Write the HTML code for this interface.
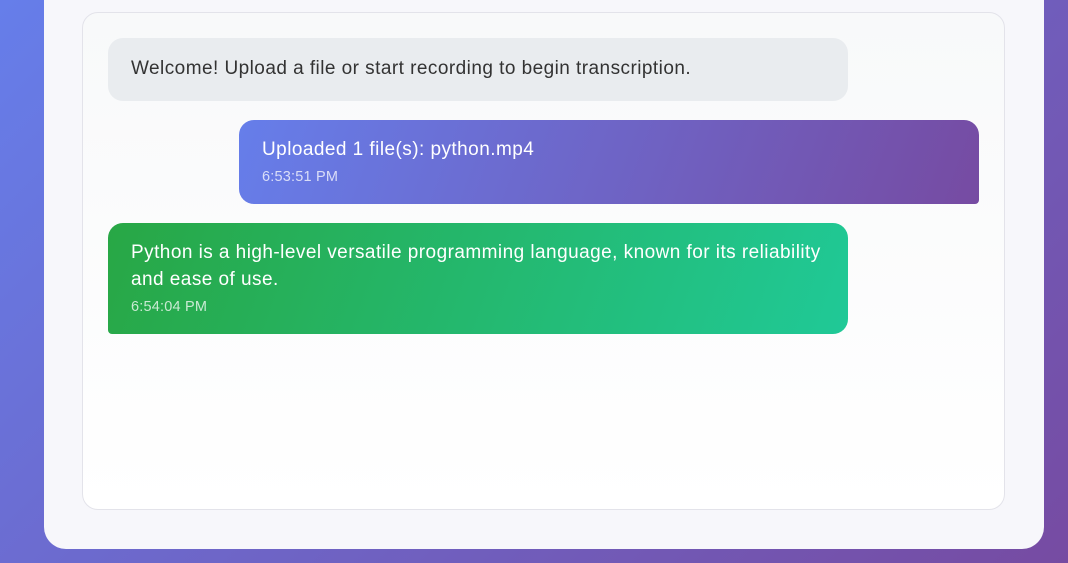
<!DOCTYPE html>
<html><head><meta charset="utf-8"><style>
html,body{margin:0;padding:0;width:1068px;height:563px;overflow:hidden}
body{background:linear-gradient(135deg,#667eea 0%,#764ba2 100%);font-family:"Liberation Sans",sans-serif;position:relative}
.card{position:absolute;left:44px;top:-40px;width:1000px;height:589px;background:#f7f7fb;border-radius:22px}
.chat{position:absolute;left:82px;top:12px;width:921px;height:496px;border:1.5px solid #e3e3ea;border-radius:16px;background:linear-gradient(180deg,#f8f9fa 0%,#ffffff 100%)}
.b{position:absolute;box-sizing:border-box;padding:0 23px;font-size:19px;letter-spacing:0.45px;line-height:27px;border-radius:15px}
.b1{left:108px;top:38px;width:740px;height:63px;background:#e9ecef;color:#333;padding-top:17px}
.b2{left:239px;top:120px;width:740px;height:84px;background:linear-gradient(110deg,#667eea 0%,#764ba2 100%);color:#fff;padding-top:16px;border-radius:15px 15px 4px 15px}
.b3{left:108px;top:223px;width:740px;height:111px;background:linear-gradient(110deg,#28a745 0%,#20c997 100%);color:#fff;padding-top:16px;border-radius:15px 15px 15px 4px}
.t{font-size:14.5px;letter-spacing:0.2px;line-height:20px;opacity:.75;margin-top:4px}
</style></head><body>
<div class="card"></div>
<div class="chat"></div>
<div class="b b1">Welcome! Upload a file or start recording to begin transcription.</div>
<div class="b b2">Uploaded 1 file(s): python.mp4<div class="t">6:53:51 PM</div></div>
<div class="b b3">Python is a high-level versatile programming language, known for its reliability<br>and ease of use.<div class="t">6:54:04 PM</div></div>
</body></html>
